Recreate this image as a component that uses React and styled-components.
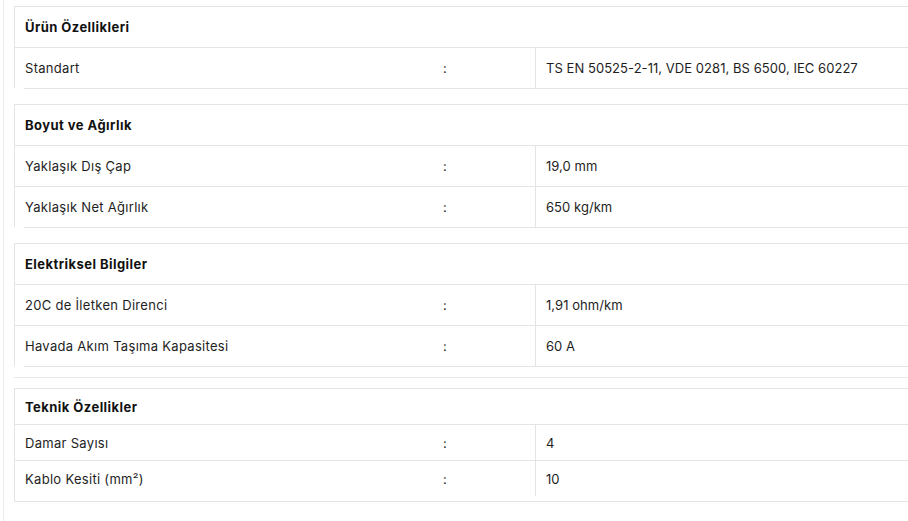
import React from "react";
import styled, { createGlobalStyle } from "styled-components";

const GlobalStyle = createGlobalStyle`
  html, body { margin: 0; padding: 0; background: #fff; overflow: hidden; }
  body { font-family: Inter, "Noto Sans", sans-serif; color: #1e1e1e; }
`;

const Page = styled.div`
  margin-left: 3px;
  border-left: 1px solid #ececec;
  padding: 6px 0 40px 10px;
  min-height: 521px;
  box-sizing: border-box;
`;

const Section = styled.section`
  display: flex;
  flex-direction: column;
  margin-bottom: ${p => p.$gap}px;
`;

const Table = styled.div`
  border-left: 1px solid #e4e4e4;
  border-top: 1px solid #e4e4e4;
  padding-bottom: ${p => p.$padBottom || 0}px;
`;

const Header = styled.div`
  height: ${p => p.$h}px;
  display: flex;
  align-items: center;
  padding-left: 10px;
  border-bottom: 1px solid #e4e4e4;
  font-size: 13px;
  font-weight: 700;
  letter-spacing: 0.45px;
  color: #111;
`;

const Row = styled.div`
  display: grid;
  grid-template-columns: 418px 102px 1fr;
  height: ${p => p.$h}px;
  border-bottom: ${p => (p.$last ? "none" : "1px solid #e4e4e4")};
  font-size: 13px;
`;

const Cell = styled.div`
  display: flex;
  align-items: center;
  padding-left: 10px;
  white-space: nowrap;
  letter-spacing: ${p => (p.$divided ? "0.05px" : "0.3px")};
  border-left: ${p => (p.$divided ? "1px solid #e4e4e4" : "none")};
`;

const Rule = styled.div`
  height: 0;
  border-top: 1px solid #e4e4e4;
  margin-left: ${p => (p.$inset ? 10 : 0)}px;
`;

const Separator = styled.div`
  height: 0;
  border-top: 1px solid #e8e8e8;
  margin-bottom: 10px;
`;

const sections = [
  {
    title: "Ürün Özellikleri",
    rows: [["Standart", "TS EN 50525-2-11, VDE 0281, BS 6500, IEC 60227"]],
    gap: 15,
  },
  {
    title: "Boyut ve Ağırlık",
    rows: [
      ["Yaklaşık Dış Çap", "19,0 mm"],
      ["Yaklaşık Net Ağırlık", "650 kg/km"],
    ],
    gap: 15,
  },
  {
    title: "Elektriksel Bilgiler",
    rows: [
      ["20C de İletken Direnci", "1,91 ohm/km"],
      ["Havada Akım Taşıma Kapasitesi", "60 A"],
    ],
    gap: 10,
  },
];

function SpecTable({ title, rows, h, inset, padBottom, gap }) {
  return (
    <Section $gap={gap}>
      <Table $padBottom={padBottom}>
        <Header $h={h}>{title}</Header>
        {rows.map(([label, value], i) => (
          <Row key={label} $h={h} $last={i === rows.length - 1}>
            <Cell>{label}</Cell>
            <Cell>:</Cell>
            <Cell $divided>{value}</Cell>
          </Row>
        ))}
      </Table>
      <Rule $inset={inset} />
    </Section>
  );
}

export default function App() {
  return (
    <>
      <GlobalStyle />
      <Page>
        {sections.map(s => (
          <SpecTable key={s.title} {...s} h={40} inset />
        ))}
        <Separator />
        <SpecTable
          title="Teknik Özellikler"
          rows={[
            ["Damar Sayısı", "4"],
            ["Kablo Kesiti (mm²)", "10"],
          ]}
          h={35}
          padBottom={5}
          gap={0}
        />
      </Page>
    </>
  );
}
